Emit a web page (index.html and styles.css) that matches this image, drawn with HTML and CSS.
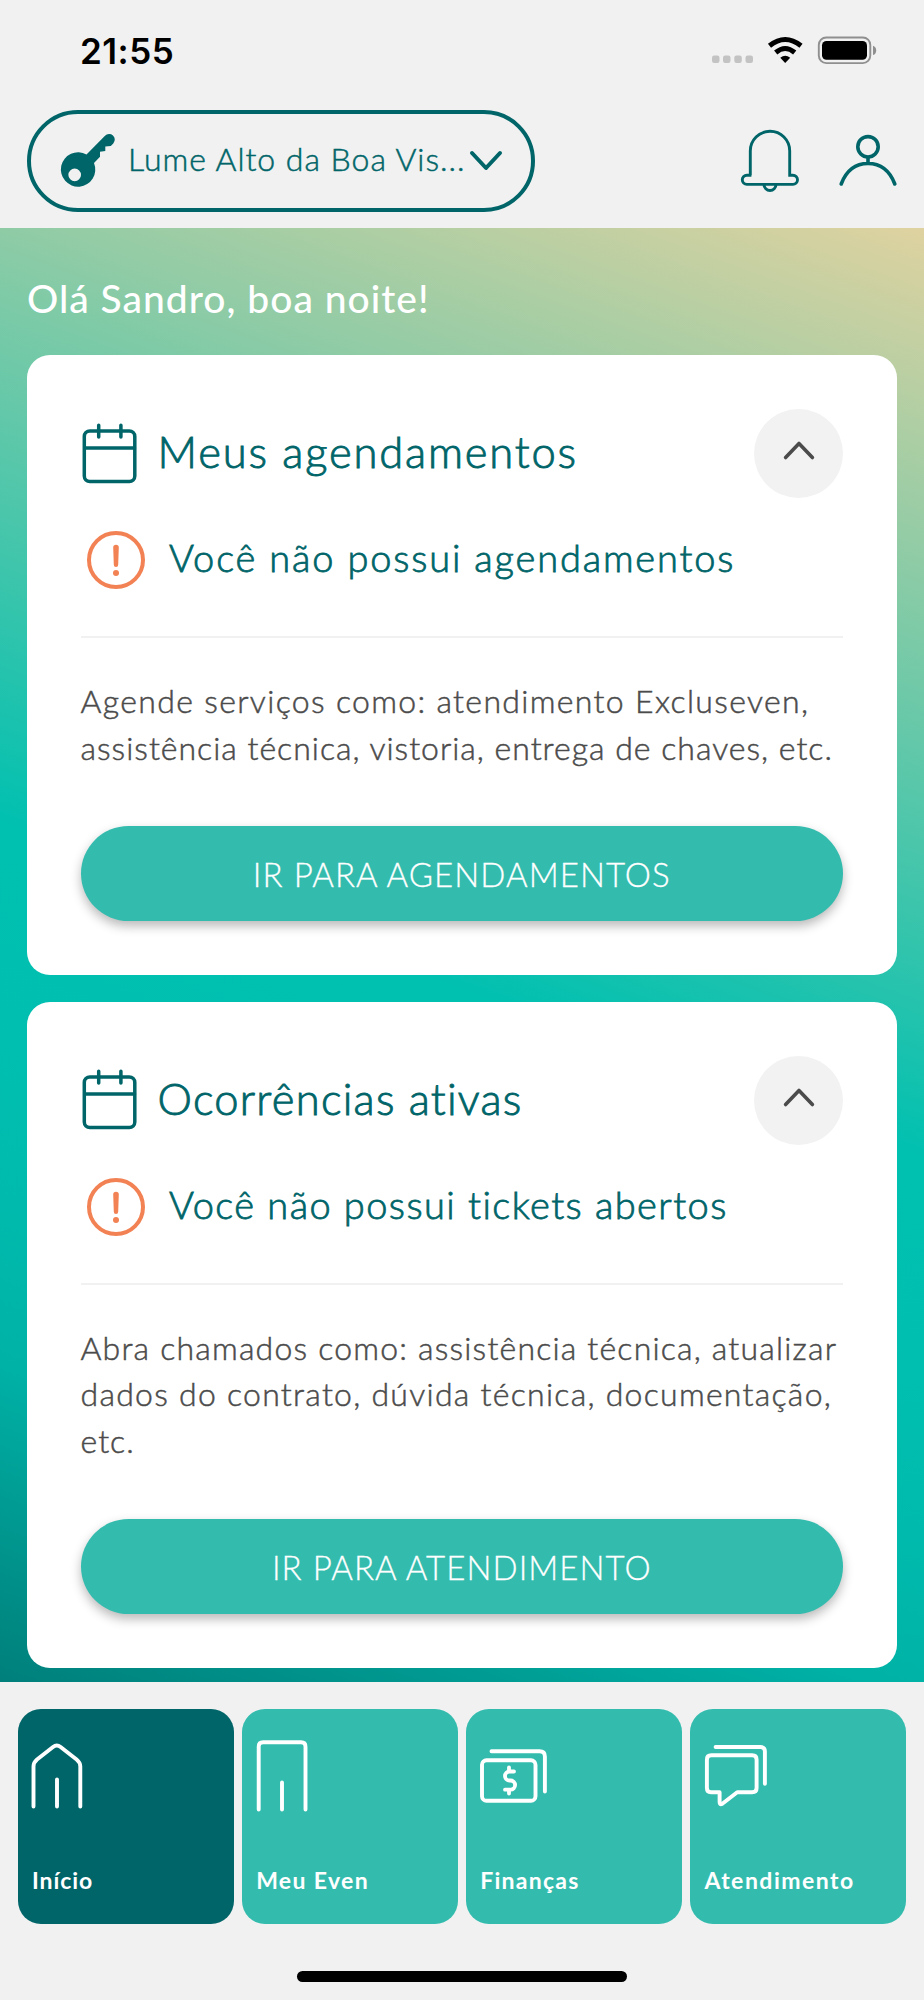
FILE: index.html
```html
<!DOCTYPE html>
<html lang="pt-BR">
<head>
<meta charset="utf-8">
<title>Início</title>
<link rel="stylesheet" href="styles.css">
</head>
<body>
<div class="app">
  <header class="header">
    <div class="status">
      <span class="clock">21:55</span>
      <svg class="status-icons" width="168" height="30" viewBox="0 0 168 30">
        <g fill="#c3c3c3"><rect x="0" y="19.5" width="7.5" height="7.5" rx="2.2"/><rect x="11" y="19.5" width="7.5" height="7.5" rx="2.2"/><rect x="22.3" y="19.5" width="7.5" height="7.5" rx="2.2"/><rect x="33.5" y="19.5" width="7.5" height="7.5" rx="2.2"/></g>
        <g fill="none" stroke="#000" stroke-width="5"><path d="M57.5 9.700Q73.200-2.700 89 9.700"/><path d="M63.700 16.500Q73.200 8.500 82.700 16.500"/></g>
        <path d="M68.300 21.800Q73.200 17.600 78.200 21.800L73.200 27Z"/>
        <rect x="106.800" y="1.500" width="51.500" height="25.600" rx="7.500" fill="none" stroke="#8f8f8f" stroke-width="1.900"/>
        <rect x="110" y="4.900" width="45" height="18.800" rx="4.500"/>
        <path d="M161 9.700q3.200 1.200 3.200 4.700t-3.200 4.700z" fill="#8f8f8f"/>
      </svg>
    </div>
    <div class="toolbar">
      <div class="unit">
        <svg class="key" width="52" height="56" viewBox="0 0 52 56">
          <path fill="#006569" fill-rule="evenodd" d="M24.500 21.500 43 2.800a5.600 5.600 0 0 1 8.300 7.600l-2.500 2.700-5.500.4v4.600l-5.300.7v5l-6 6.200a17.200 17.200 0 1 1-7.500-8.500ZM12.700 35.600a6.300 6.300 0 1 0 0 12.600 6.300 6.300 0 0 0 0-12.600Z"/>
        </svg>
        <span class="unit-name">Lume Alto da Boa Vis...</span>
        <svg width="34" height="22" viewBox="0 0 34 22"><path d="M3 3 17 18 31 3" fill="none" stroke="#006569" stroke-width="4" stroke-linecap="round" stroke-linejoin="round"/></svg>
      </div>
      <div class="actions">
        <svg width="60" height="64" viewBox="0 0 60 64" fill="none" stroke="#006569" stroke-width="2.900"><path d="M10.300 46.200V22a19.700 19.700 0 0 1 39.400 0V46.200h3.200a4.600 4.600 0 0 1 0 9.200H6.900a4.600 4.600 0 0 1 0-9.200h4.500"/><path d="M24 55.500a6 6 0 0 0 12 0"/></svg>
        <svg width="60" height="56" viewBox="0 0 60 56" fill="none" stroke="#006569" stroke-width="3.600" stroke-linecap="round"><circle cx="30" cy="13.800" r="10.200"/><path d="M30 24.500v5M3.200 51Q11 30.500 30 30.500T56.800 51"/></svg>
      </div>
    </div>
  </header>

  <main class="main">
    <h1 class="greeting">Olá Sandro, boa noite!</h1>

    <section class="card">
      <div class="card-head">
        <svg class="calendar" width="56" height="62" viewBox="0 0 56 62" fill="none" stroke="#006569" stroke-width="3.500" stroke-linecap="round"><rect x="3.300" y="8" width="50.500" height="50.500" rx="5.500"/><path d="M4 25H53.500M17.700 2.200V14M39.900 2.200V14"/></svg>
        <h2 class="title title-a">Meus agendamentos</h2>
        <span class="toggle"><svg width="32" height="20" viewBox="0 0 32 20"><path d="M2.600 16.500 16 2.500 29.400 16.500" fill="none" stroke="#4b4b4b" stroke-width="3.600" stroke-linecap="round" stroke-linejoin="round"/></svg></span>
      </div>
      <div class="notice">
        <svg width="58" height="58" viewBox="0 0 58 58"><circle cx="29" cy="29" r="27" fill="none" stroke="#f28254" stroke-width="4"/><path d="M26.200 16.500a2.800 2.800 0 0 1 5.600 0L31.200 33.800a2.200 2.200 0 0 1-4.400 0Z" fill="#f28254"/><circle cx="29" cy="42" r="3" fill="#f28254"/></svg>
        <p class="notice-text notice-a">Você não possui agendamentos</p>
      </div>
      <hr class="rule">
      <p class="body"><span class="line l1">Agende serviços como: atendimento Excluseven,</span> <span class="line l2">assistência técnica, vistoria, entrega de chaves, etc.</span></p>
      <button class="cta cta-a">IR PARA AGENDAMENTOS</button>
    </section>

    <section class="card">
      <div class="card-head">
        <svg class="calendar" width="56" height="62" viewBox="0 0 56 62" fill="none" stroke="#006569" stroke-width="3.500" stroke-linecap="round"><rect x="3.300" y="8" width="50.500" height="50.500" rx="5.500"/><path d="M4 25H53.500M17.700 2.200V14M39.900 2.200V14"/></svg>
        <h2 class="title title-b">Ocorrências ativas</h2>
        <span class="toggle"><svg width="32" height="20" viewBox="0 0 32 20"><path d="M2.600 16.500 16 2.500 29.400 16.500" fill="none" stroke="#4b4b4b" stroke-width="3.600" stroke-linecap="round" stroke-linejoin="round"/></svg></span>
      </div>
      <div class="notice">
        <svg width="58" height="58" viewBox="0 0 58 58"><circle cx="29" cy="29" r="27" fill="none" stroke="#f28254" stroke-width="4"/><path d="M26.200 16.500a2.800 2.800 0 0 1 5.600 0L31.200 33.800a2.200 2.200 0 0 1-4.400 0Z" fill="#f28254"/><circle cx="29" cy="42" r="3" fill="#f28254"/></svg>
        <p class="notice-text notice-b">Você não possui tickets abertos</p>
      </div>
      <hr class="rule">
      <p class="body"><span class="line l3">Abra chamados como: assistência técnica, atualizar</span> <span class="line l4">dados do contrato, dúvida técnica, documentação,</span> <span class="line l5">etc.</span></p>
      <button class="cta cta-b">IR PARA ATENDIMENTO</button>
    </section>
  </main>

  <footer class="footer">
    <nav class="tabs">
      <a class="tab active">
        <svg width="76" height="80" viewBox="0 0 76 80"><path d="M5.500 66.500V26.500Q5.500 22.500 9 19.500L25 7Q28.800 4 32.600 7L48.600 19.500Q52.300 22.500 52.300 26.500V66.500M29 39.500V66.500"/></svg>
        <span class="n1">Início</span>
      </a>
      <a class="tab">
        <svg width="76" height="80" viewBox="0 0 76 80"><path d="M6.700 69.500V6.700Q6.700 2.300 11.200 2.300H49Q53.500 2.300 53.500 6.700V69.500M30 42.500V69.500"/></svg>
        <span class="n2">Meu Even</span>
      </a>
      <a class="tab">
        <svg width="76" height="80" viewBox="0 0 76 80"><rect x="6" y="20.300" width="53.500" height="40.500" rx="4.500"/><path d="M15.500 11.300H63.500Q68.900 11.300 68.900 16.500V51.500"/><path d="M38 31.500H33.500a4.500 4.500 0 0 0 0 9h1a4.600 4.600 0 0 1 0 9.200H29M33 27.500V31M33 50V53.500" stroke-width="3.800"/></svg>
        <span class="n3">Finanças</span>
      </a>
      <a class="tab">
        <svg width="76" height="80" viewBox="0 0 76 80"><path d="M19.600 52.300H11Q6.900 52.300 6.900 48V19.700Q6.900 15.300 11.300 15.300H52.200Q56.600 15.300 56.600 19.700V48Q56.600 52.300 52.200 52.300H37.200L22 64Q19.600 65 19.600 62V52.300"/><path d="M15.600 7H60.500Q64.900 7 64.900 11.500V43.800"/></svg>
        <span class="n4">Atendimento</span>
      </a>
    </nav>
    <div class="home-bar"></div>
  </footer>
</div>
</body>
</html>
```
FILE: styles.css
```css
* { box-sizing: border-box; margin: 0; padding: 0; }
body { width: 924px; background: #f1f1f1; font-family: Lato, "Liberation Sans", sans-serif; font-variant-ligatures: none; }
svg { display: block; flex: none; overflow: visible; }
.app { display: flex; flex-direction: column; height: 2000px; overflow: hidden; }

.header { height: 228px; flex: none; background: #f1f1f1; }
.status { height: 110px; padding: 36px 0 0 80px; display: flex; }
.clock { font: 600 35px/30px Inter, sans-serif; letter-spacing: .5px; width: 632px; color: #000; }
.toolbar { display: flex; align-items: center; padding: 0 20px 0 27px; height: 102px; }
.unit { width: 507.5px; flex: none; height: 102px; border: 4.5px solid #006569; border-radius: 51px; display: flex; align-items: center; padding-left: 31px; }
.unit-name { font-weight: 300; font-size: 32px; line-height: 40px; letter-spacing: .98px; color: #006569; width: 354.5px; padding: 0 0 4px 14px; white-space: nowrap; -webkit-text-stroke: .5px #006569; }
.actions { display: flex; align-items: center; gap: 38px; margin-left: 205px; }

.main { height: 1454px; flex: none; padding: 45px 27px 0; background: linear-gradient(20deg, #007f7b 0%, #00b2a6 18%, #00bbad 27%, #00bfb0 36%, #00c0b0 48%, #dfd2a0 100%); }
.greeting { font-weight: 500; font-size: 39px; line-height: 50px; letter-spacing: 1px; color: #fff; white-space: nowrap; margin-bottom: 32px; }
.card { background: #fff; border-radius: 23px; padding: 54px 54px 54px 53.5px; margin-bottom: 27px; }
.card-head { display: flex; align-items: center; height: 89px; }
.title { font-weight: 300; font-size: 43.5px; line-height: 60px; color: #006569; flex: 1; padding: 0 0 5px 21px; white-space: nowrap; -webkit-text-stroke: .9px #006569; }
.title-a { letter-spacing: 1.83px; }
.title-b { letter-spacing: 1.25px; }
.toggle { width: 89px; height: 89px; border-radius: 50%; background: #f2f2f2; display: flex; align-items: center; justify-content: center; padding-bottom: 5px; }
.notice { display: flex; align-items: center; height: 58px; margin-top: 33px; padding-left: 6.5px; }
.notice-text { font-weight: 300; font-size: 38px; line-height: 50px; color: #006569; padding: 0 0 6px 24px; white-space: nowrap; -webkit-text-stroke: .8px #006569; }
.notice-a { letter-spacing: 1.83px; }
.notice-b { letter-spacing: 1.43px; }
.rule { border: 0; height: 2px; background: #f1f1f1; margin: 47px 0 40px; }
.body { font-size: 32px; line-height: 46.8px; font-weight: 300; color: #4b4b4b; -webkit-text-stroke: .5px #4b4b4b; }
.line { display: block; white-space: nowrap; }
.l1 { letter-spacing: 1.33px; }
.l2 { letter-spacing: 1px; }
.l3 { letter-spacing: 1.2px; }
.l4 { letter-spacing: 1.27px; }
.l5 { letter-spacing: 1px; }
.cta { display: block; width: 100%; height: 95px; margin-top: 54px; padding-top: 2px; border: 0; border-radius: 48px; background: #33bcae; color: #fff; font: 300 33px/40px Lato, sans-serif; letter-spacing: 1.08px; -webkit-text-stroke: .3px #fff; box-shadow: 0 5px 11px rgba(0,0,0,.28); }

.footer { flex: 1; background: #f1f1f1; padding: 27px 18px 0; display: flex; flex-direction: column; align-items: center; }
.tabs { display: grid; grid-template-columns: repeat(4, 1fr); gap: 8.5px; width: 100%; }
.tab { height: 215px; border-radius: 23px; background: #33bcae; padding: 31px 10px 0; color: #fff; font-weight: 700; font-size: 23px; line-height: 30px; }
.tab svg { fill: none; stroke: #fff; stroke-width: 3.9; stroke-linecap: round; stroke-linejoin: round; }
.tab span { display: block; margin-top: 45px; padding-left: 4px; }
.n1 { letter-spacing: .9px; }
.n2 { letter-spacing: 1.35px; }
.n3 { letter-spacing: 1.25px; }
.n4 { letter-spacing: 1.5px; }
.active { background: #006569; }
.home-bar { width: 330px; height: 11px; border-radius: 6px; background: #000; margin-top: 47px; }
```
